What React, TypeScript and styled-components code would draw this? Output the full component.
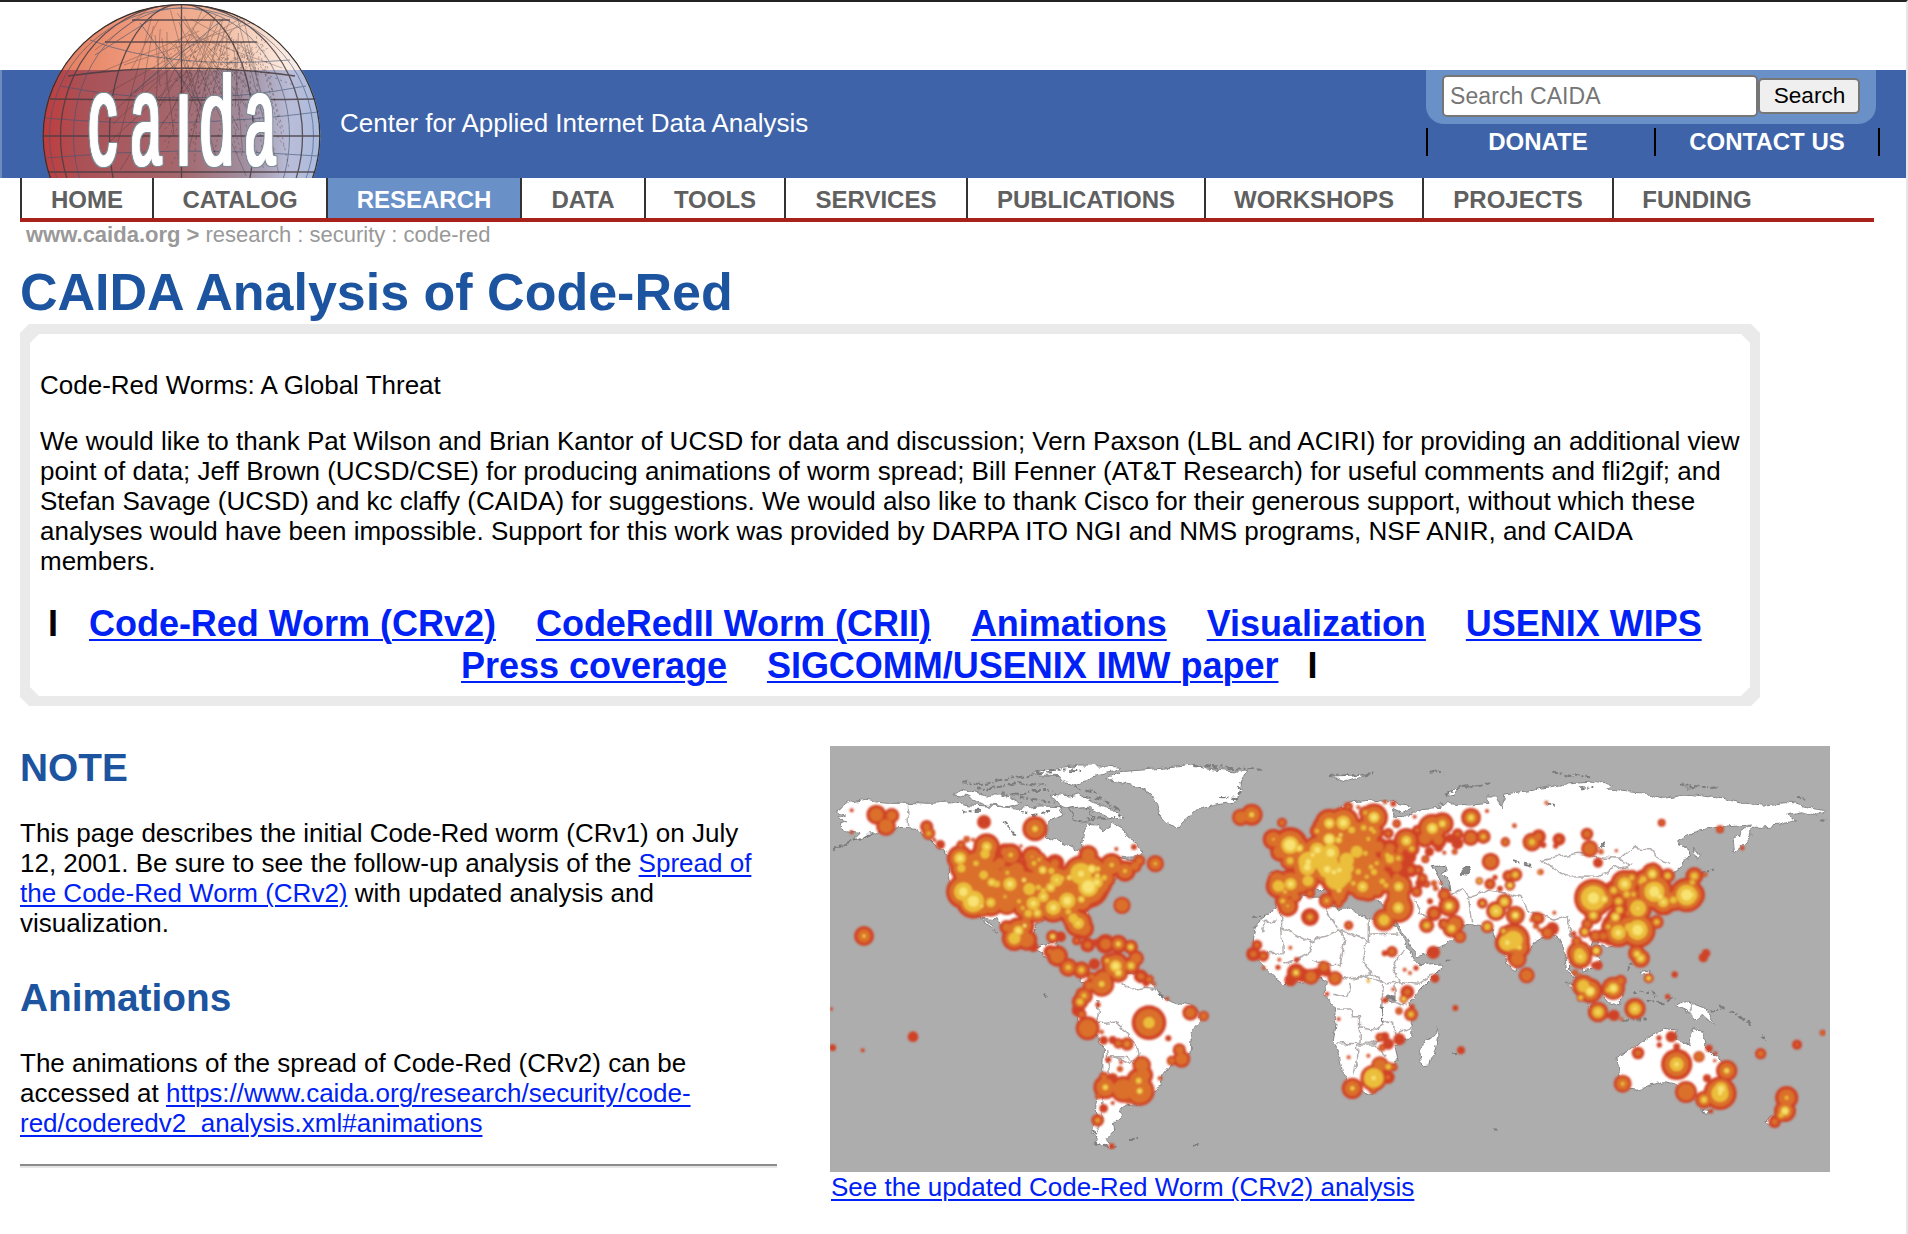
import React from 'react';
import styled, { createGlobalStyle } from 'styled-components';

const GlobalStyle = createGlobalStyle`
  * { box-sizing: border-box; }
  body { margin: 0; background: #fff; overflow: hidden; }
`;

const Page = styled.div`
  width: 1908px;
  height: 1234px;
  overflow: hidden;
  border-top: 2px solid #232323;
  border-right: 2px solid #e6e6e6;
  background: #fff;
  color: #000;
  font: 26px/30px "Liberation Sans", Arial, Helvetica, sans-serif;
`;

const Header = styled.header`
  display: flex;
  height: 176px;
  padding-left: 40px;
  background:
    linear-gradient(90deg, #6e8bc0 2px, transparent 2px) 0 68px no-repeat,
    linear-gradient(#fff 68px, #3e63a9 68px);
`;

const Globe = styled.svg`
  display: block;
  width: 284px;
  height: 176px;
  flex: none;
  overflow: visible;
`;

const Tagline = styled.div`
  margin: 106px 0 0 16px;
  color: #fff;
  white-space: nowrap;
`;

const Tools = styled.div`
  width: 480px;
  margin: 68px 0 0 auto;
`;

const SearchPanel = styled.form`
  display: flex;
  align-items: center;
  width: 450px;
  height: 54px;
  padding: 2px 0 4px 16px;
  border-radius: 0 0 18px 18px;
  background: #6a90c8;
`;

const SearchInput = styled.input`
  width: 316px;
  height: 42px;
  padding: 1px 6px 0;
  border: 2px solid #767676;
  border-radius: 5px;
  outline: none;
  background: #fff;
  font: 23px "Liberation Sans", Arial, sans-serif;
  letter-spacing: 0.1px;
  &::placeholder { color: #757575; opacity: 1; }
`;

const SearchButton = styled.button`
  width: 102px;
  height: 36px;
  padding: 0 0 0 1px;
  border: 2px solid #767676;
  border-radius: 5px;
  background: #efefef;
  color: #000;
  font: 22.6px "Liberation Sans", Arial, sans-serif;
`;

const QuickLinks = styled.div`
  display: grid;
  grid-template-columns: 228px 226px;
  height: 28px;
  margin-top: 4px;
  width: 454px;
  border-right: 2px solid #000;
`;

const QuickLink = styled.a<{ $inset: number }>`
  padding-right: ${(p) => p.$inset}px;
  border-left: 2px solid #000;
  color: #fff;
  text-align: center;
  font-size: 24px;
  font-weight: bold;
  line-height: 27px;
`;

const Nav = styled.nav`
  display: flex;
  width: 1854px;
  height: 44px;
  margin-left: 20px;
  border-bottom: 4px solid #a9211b;
`;

const NavItem = styled.a<{ $width: number; $active?: boolean }>`
  width: ${(p) => p.$width}px;
  border-left: 2px solid #333;
  background: ${(p) => (p.$active ? '#6a90c8' : '#fff')};
  color: ${(p) => (p.$active ? '#fff' : '#606060')};
  text-align: center;
  font-size: 24px;
  font-weight: bold;
  line-height: 43px;
`;

const Breadcrumb = styled.div`
  padding: 1px 26px 0;
  height: 28px;
  color: #999;
  font-size: 22px;
  line-height: 24px;
`;

const Title = styled.h1`
  margin: 12px 0 0 20px;
  height: 62px;
  color: #1c54a0;
  font-size: 52px;
  line-height: 60px;
`;

const BoxFrame = styled.section`
  width: 1740px;
  height: 382px;
  margin-left: 20px;
  padding: 10px;
  background: #eaeaea;
  clip-path: polygon(9px 0, calc(100% - 9px) 0, 100% 9px, 100% calc(100% - 9px), calc(100% - 9px) 100%, 9px 100%, 0 calc(100% - 9px), 0 9px);
`;

const BoxBody = styled.div`
  height: 100%;
  padding: 36px 0 0 10px;
  background: #fff;
  clip-path: polygon(9px 0, calc(100% - 9px) 0, 100% 9px, 100% calc(100% - 9px), calc(100% - 9px) 100%, 9px 100%, 0 calc(100% - 9px), 0 9px);
`;

const Paragraph = styled.p`
  margin: 0 0 26px;
`;

const Line = styled.span`
  display: block;
  white-space: nowrap;
`;

const Link = styled.a`
  color: #0021f5;
  text-decoration: underline;
  text-decoration-thickness: 2px;
  text-underline-offset: 3px;
`;

const JumpLinks = styled.div`
  padding-top: 1px;
  font-size: 36px;
  font-weight: bold;
  line-height: 42px;
  letter-spacing: -0.02px;
`;

const JumpRow = styled.div<{ $indent: number }>`
  display: flex;
  gap: 40px;
  padding-left: ${(p) => p.$indent}px;
  white-space: nowrap;
`;

const LeftBar = styled.span`
  margin-right: -9px;
`;

const RightBar = styled.span`
  margin-left: -11px;
`;

const Columns = styled.main`
  display: flex;
  gap: 53px;
  padding: 40px 0 0 20px;
`;

const Column = styled.div`
  width: 757px;
`;

const Section = styled.section`
  height: 230px;
`;

const Heading = styled.h2`
  margin: 0;
  height: 72px;
  color: #1c54a0;
  font-size: 38.8px;
  line-height: 44px;
`;

const Rule = styled.hr`
  margin: -42px 0 0;
  border: 0;
  height: 4px;
  border-top: 2px solid #8c8c8c;
  border-bottom: 2px solid #e6e6e6;
`;

const Figure = styled.figure`
  margin: 0;
  width: 1000px;
`;

const Caption = styled.figcaption`
  padding-left: 1px;
`;

const MapSvg = styled.svg`
  display: block;
  width: 1000px;
  height: 426px;
`;

const navItems = [
  { label: 'HOME', width: 132 },
  { label: 'CATALOG', width: 174 },
  { label: 'RESEARCH', width: 194, active: true },
  { label: 'DATA', width: 124 },
  { label: 'TOOLS', width: 140 },
  { label: 'SERVICES', width: 182 },
  { label: 'PUBLICATIONS', width: 238 },
  { label: 'WORKSHOPS', width: 218 },
  { label: 'PROJECTS', width: 190 },
  { label: 'FUNDING', width: 168 },
];

// Host clusters, grouped by region. Each entry is: x y red orange yellow pale (radii).
const regions: { dx: number; dy: number; data: string }[] = [
  {
    dx: 0, dy: 0,
    data: `169 224 30 20;215 227 23 14;198 258 30 21;320 260 20 10;326 280 20 14 5;361 314 14;343 300 6;492 246 21;645 266 38 28 9 3;
95 211 6;95 277 6;440 298 10 6;459 299 6 3;423 315 14 7;942 321 9;889 327 6;603 318 5;1006 371 26 18 5;906 496 26 19;132 588 30 20 6;
500 320 40 30 15 6;495 342 40 30 14;420 355 40 30 18 9;424 385 35 25 12;430 455 52 42 28 13;460 484 52 42 32 17;512 488 42 32 14 4;
485 498 34 26 6 4;440 405 42 32;468 370 42 32 8;491 405 60 50 13;515 427 50 40 12 5;530 432 40 30 10;570 432 60 50 20 9;562 398 30 20 6;
540 370 34 16;572 345 35 24 7;555 335 25 12;590 390 34 22;636 350 32 22 3;560 490 35 27;555 470 26 20 5;628 447 60 50 18;612 420 34 26 7 5;
642 370 30 22 7;657 359 24 17 5;705 370 28 12;668 390 40 30 12 6;694 393 30 22 9;710 420 45 35 19 5;725 415 24 18 8;692 442 40 30 14 6;
748 413 34 28 8 4;783 401 55 45 32 9;815 387 44 34 14 9;833 387 30 22 8 3;832 407 30 22 8 4;805 345 30 20;805 440 64 50 30 19;830 427 48 38 18 8;
853 413 34 26 8;875 375 36 26 7;915 393 32 22 6;945 378 20 12;958 362 18 10;742 482 50 42 24 12;700 503 45 35 22 9;640 490 55 45 20 8;
652 519 30 22 12 5;625 520 30 22 11;608 504 30 20 6;597 484 30 20 6;670 470 40 30 16 6;655 442 30 24 8;670 452 30 24 8;784 478 40 30 10 4;
595 572 40 30 15 8;583 595 38 28 18;614 557 30 20 6 5;620 600 32 22;640 620 16;560 562 22 12;745 515 34 24 8;760 535 34 26 14;775 550 42 32 17 5;
790 565 32 22;698 590 20 12 7 4;722 590 16;770 602 14 6;803 615 22 10;830 608 12;857 612 30 16;895 612 28 18 8 3;932 621 22 14 8 3;948 655 24 16;
690 635 20 8;712 648 32 22;745 682 28 19 8;784 690 26 17 8;823 672 17;862 662 20 12 6;887 678 42 32 18 10;933 677 26 18 10 3;895 698 30 22 11 6;
850 715 30 20;965 710 20 8`,
  },
  {
    dx: 0, dy: 660,
    data: `845 72 38 30 9 3;792 107 27 18 7;780 125 25 16 9;775 150 20;803 205 36 27;785 163 15 8;808 77 20 12;815 50 14 8;834 134 8;851 241 13;
845 216 7 4;878 240 12;895 250 16 9;921 252 20 12 3;865 299 9;903 307 6;900 327 9 5;987 188 52 41 17;1111 158 24 15;1151 168 16 10;1042 116 6;
1045 235 9;1078 270 20 12;1085 297 26 18;1055 302 15 9;965 315 28 20;970 345 30 20;956 362 38 28 9 3;959 393 45 36 9 5;910 388 40 31;856 382 36 27 9 4;
852 350 15 8;878 355 16;835 408 10 5;851 445 13;878 429 6;833 481 19 11 4;875 559 9;1020 355 7 3;279 230 16;128 271 6;38 263 10;34 147 5;
961 48 20 8;988 58 14 8;978 70 10;1003 72 6 3;925 425 8 4`,
  },
  {
    dx: 1080, dy: 0,
    data: `182 232 26 18;215 224 33 24 8 3;306 248 15 8;280 298 32 22 4;330 315 54 42 26 17;300 335 30 20;330 362 30 22 10;358 325 34 26 12 6;
448 250 44 34 16 8;490 248 48 38 21 10;505 200 14 6;411 273 22 13 6;430 262 34 24;515 270 40 30 10;470 285 44 34;448 298 50 40 18 12;476 300 40 30 10 4;
482 285 30 20 6 4;412 330 44 36 22 10;385 365 50 40 30 8;382 382 50 40 24 10;384 422 34 26 16;398 345 40 30 14 6;452 338 52 42 26 12;440 370 58 46 34;
442 388 50 40 26 10;462 397 46 36 24 7;478 390 46 36 22 7;470 415 50 40 34;500 360 50 40 22;495 410 40 30 20;530 335 50 40 18;505 385 40 30 16;
477 450 34 24 8 3;475 465 30 20;476 490 14 7;556 340 44 32 7;582 232 42 32 17 9;556 218 20 12 5;551 263 30 20 8;574 267 30 20 7;582 275 30 20 6;
565 297 36 26 6;595 320 30 16;535 202 6 3;615 186 7 3;640 191 9;650 251 13 6;625 280 16 7;530 300 36 24;535 395 44 32 8;520 430 36 26 7;
548 440 42 32 16 6;573 381 36 24 7;582 396 30 20 9;570 360 30 22;590 370 26 18 6;560 410 30 22 6;600 420 44 32;607 424 30 20 8;618 436 24 16 7;
565 455 30 20;590 450 26 16;622 346 30 20 7;630 357 34 24 12;655 355 26 16 7;650 380 36 16;605 380 26 10;630 325 28 14;660 330 30 10;
679 302 38 28 15 6;695 326 24 14 7;685 350 24;692 390 22 9;715 390 16 6;727 415 16 8;740 432 11 4;656 440 42 32 14 5;650 410 34 10;
655 503 46 36 16 6;612 540 34 26 16;655 470 36 28;292 420 30 22;295 438 38 28 17;300 440 34 26 14;332 432 44 34 18 8;315 455 30 20 6;
360 430 36 26;390 460 16 8;345 470 20 12;323 498 32 22 4;308 483 24 14 7;390 531 27 13 5;440 482 24 16 5;506 556 14 7;720 430 14;710 455 17 9;
757 265 44 34 17 9;787 251 34 24 11 4;735 295 28 18;775 300 26 14;776 322 14;712 270 16 6;704 230 6;748 335 14;736 358 12 6;793 338 6;833 282 17 7;
810 295 14;832 310 18;872 293 25 16;910 290 22 14 6;824 335 9 5;873 233 30 21 11 4;976 306 14 8;921 213 6;1003 257 7 3;1056 306 28 19 8;
1075 290 18 10;932 365 27 18;945 412 8;930 432 17 8;898 423 11 8 5;1006 404 21 14 8;985 408 18 8;990 436 16 10 8 4;960 446 9;1078 397 7 4 3;
762 430 9 5;767 445 8 4;782 429 5;750 484 9;793 464 20 11;807 498 32 22 12 7;762 520 23 12;740 556 23 16 8;792 552 18 9;825 552 28 20;
815 565 28 20 11 3;840 590 19 12;760 637 20;907 490 16 8 4;973 485 24 17 12 4;948 513 30 21 18 6;1006 526 29 21 11 7;922 560 19 13 9;
1000 600 50 40 28;982 608 38 28 24 7;1018 622 34 24 8 4;970 573 14 8 6;1012 657 28 20;990 655 10;1040 706 24 17;1070 533 18 9`,
  },
  {
    dx: 2040, dy: 0,
    data: `44 257 6 3;16 306 14 8;96 306 28 19 8;116 290 22 10;130 315 9;177 298 19 6;167 318 8;261 282 19 10;269 326 26 18;303 335 8 5;294 368 15;
139 188 6 3;349 332 5;485 248 12 5;660 268 12 5;727 324 7;122 396 9 5;280 474 58 48 37 17;312 478 36 26 12 7;374 432 43 33 20 9;
395 413 24 14 7;341 451 30 16 9;380 463 34 16 9;356 484 30 16 9;400 463 26 14 6;460 385 18 9;457 402 34 24 14 7;430 418 30 18 9;422 425 24 14 6;
503 407 22 14 8;463 455 56 46 30 16;490 486 40 30 16 6;480 470 40 30 10 7;520 480 34 24 10;560 465 52 42 31 17;575 465 40 30 18 6;
583 408 27 18 10;577 427 22 14 7;615 404 7 4;414 505 42 32 24 4;400 490 30 20;413 570 54 44 30 16;387 562 40 30 12;355 578 44 34 22 9;
346 531 26 16 12 6;358 510 24 14 9;340 555 34 20;325 560 22 12 6;385 520 30 8;280 526 27 18 11 4;262 552 18 10;254 575 18 12 8;286 588 19 11;
310 588 22 10;330 595 22;470 546 21 14 7;410 640 26 18 8;422 655 28 20 12 5;411 642 24 16 10 4;221 581 8;230 603 16 9;238 640 38 29 15;241 650 36 28 19 6;
289 632 18 11 10 4;294 676 14;283 676 10;618 640 13;610 653 14;524 704 9;157 566 20;142 578 20 12;116 535 18 9;95 540 7 4;108 558 9 5;
163 518 6 3;119 570 7 4`,
  },
  {
    dx: 1200, dy: 540,
    data: `111 75 16 7;100 102 22 9;130 108 17 8;211 83 6 3;178 119 6 3;230 119 8;174 142 8;131 144 6 3;228 158 28 15 8 4;212 180 19;248 165 22;
273 170 24 16;290 160 17;312 141 19 12;318 155 15;345 175 22 15;445 183 5 5 5 2;516 95 17 9;494 100 9;554 149 6 3;570 159 6 3;588 144 8;
645 175 13;321 222 7;495 241 9;520 208 6 3;562 216 21 9;551 237 13 9 7 3;537 273 11 6;573 283 21 14 7;576 260 8;356 297 6;480 352 14 6;
494 350 14;505 372 17;538 358 18;486 383 11 6;386 412 6 3;445 407 6 3;706 264 9;723 391 12;397 505 32 23 7 3;461 474 40 33 29 7;
480 435 26 19;505 440 15 10 8;520 441 13 6;504 472 20 6;459 508 14 7`,
  },
  {
    dx: 2160, dy: 540,
    data: `105 158 9 5;120 165 6 4;130 198 34 26 18;150 212 38 28 12;150 214 34 26 16 10;122 233 12 8 7;220 205 35 27 16 9;242 182 18 10;
205 210 20 14 7;174 276 31 23 16 5;285 266 32 24 17 5;222 286 17;203 287 8;244 297 6 4;326 175 15 10 7 3;404 163 9;383 230 8;394 350 17;
357 354 8;358 375 8;294 399 19 9;248 491 27 19 6;410 380 10;410 433 47 36 21 7;477 410 17 13;507 385 11;526 400 6;524 422 5;560 452 32 23 9 4;
438 516 33 25;501 475 12;540 520 50 40 26 6;543 507 38 30 20 10;492 539 27 19 10 3;513 574 7;662 401 17 9;771 374 15 4;848 338 9 5;
740 533 35 25 6;735 573 33 24 14 8;723 586 20 14 7;704 605 19 9`,
  },
];

const layers = [
  { column: 2, color: '#d04326' },
  { column: 3, color: '#da6f2c' },
  { column: 4, color: '#ebbe3a' },
  { column: 5, color: '#f8e272' },
];

const land = [
  // North and Central America
  '50,215 85,187 140,178 200,187 262,187 330,190 400,185 450,195 540,200 600,205 660,198 720,200 735,225 690,240 672,262 680,290 720,305 775,330 790,355 785,310 790,280 800,252 830,255 850,270 880,250 905,265 920,290 950,310 970,335 960,347 890,350 945,362 930,380 900,400 860,450 800,510 812,560 800,590 780,580 750,540 700,535 650,550 640,590 650,625 690,606 712,600 715,625 700,635 760,680 830,720 810,735 760,700 700,660 650,635 600,620 560,580 530,540 490,535 430,520 390,470 385,400 390,350 350,320 320,290 290,268 250,265 200,270 140,290 40,325 100,300 120,280 80,275 60,255 80,245 50,235 80,222',
  // Greenland
  '855,118 900,95 990,88 1080,80 1125,74 1160,84 1210,90 1280,95 1266,120 1262,150 1250,185 1180,197 1130,210 1090,245 1075,264 1045,252 1020,225 1010,190 992,160 960,140 900,130',
  // Canadian Arctic
  '395,165 420,148 462,156 500,165 560,165 605,190 560,200 500,195 470,185 440,170',
  '640,100 700,88 780,78 860,78 905,82 880,95 825,105 800,125 760,135 735,125 720,110 660,108',
  '690,165 740,170 775,162 820,190 880,205 910,235 885,240 850,225 805,205 740,205 715,195',
  // South America
  '860,700 960,700 1000,735 1020,765 1060,785 1112,795 1142,842 1115,870 1110,940 1085,970 1050,975 1030,1000 1020,1030 1000,1060 980,1085 920,1095 895,1110 902,1130 880,1150 885,1170 858,1195 880,1222 840,1215 815,1180 825,1150 828,1090 848,1000 850,930 835,890 780,850 765,800 800,760 815,720',
  // Eurasia with Arabia and India
  '1350,450 1350,400 1400,395 1440,370 1500,330 1500,300 1490,270 1500,240 1560,200 1600,185 1660,180 1700,185 1760,195 1778,208 1745,216 1720,205 1725,228 1765,232 1790,210 1860,205 1860,190 1950,195 2010,190 2000,168 2030,168 2045,200 2055,165 2130,155 2160,145 2240,132 2330,125 2375,135 2360,150 2480,160 2530,175 2610,163 2700,175 2760,188 2830,195 2900,188 2960,200 3015,213 2990,228 2950,215 2900,225 2930,240 2880,255 2820,262 2796,262 2795,285 2770,315 2745,335 2738,295 2760,278 2795,255 2730,260 2640,272 2600,285 2570,308 2600,320 2612,345 2590,375 2560,402 2530,400 2480,440 2500,500 2460,520 2440,600 2360,620 2320,600 2312,620 2340,660 2330,682 2290,690 2270,660 2250,640 2252,690 2272,720 2240,690 2232,630 2215,590 2190,580 2130,615 2100,650 2088,692 2072,686 2040,620 2020,570 1950,558 1910,550 1860,540 1870,570 1900,590 1880,610 1820,635 1792,652 1770,610 1735,560 1700,500 1650,470 1600,470 1560,430 1500,450 1440,430 1400,460',
  // Africa
  '1375,480 1350,520 1312,550 1300,600 1305,640 1320,670 1360,710 1390,728 1440,725 1500,715 1522,725 1515,765 1542,800 1548,850 1540,905 1562,950 1570,1000 1600,1045 1660,1060 1710,1000 1735,960 1725,915 1775,890 1777,840 1770,790 1800,750 1860,690 1863,672 1800,677 1782,662 1765,630 1732,565 1718,545 1640,535 1585,503 1555,512 1522,492 1500,468 1450,470 1400,490',
  // Madagascar, Australia, Tasmania, New Guinea
  '1853,862 1857,885 1840,940 1825,975 1805,977 1800,940 1812,910 1838,893',
  '2388,950 2430,933 2460,910 2490,885 2530,865 2572,870 2565,890 2608,917 2625,858 2650,890 2655,915 2690,950 2722,1000 2722,1060 2660,1095 2610,1070 2560,1030 2530,1025 2490,1035 2460,1048 2408,1042 2395,1000',
  '2645,1108 2672,1112 2662,1128',
  '2563,796 2590,780 2650,803 2688,852 2665,840 2650,826 2620,840 2600,810',
  // Sumatra, Java, Borneo, Philippines, New Zealand
  '2235,720 2262,738 2300,790 2338,824 2318,818 2280,770',
  '2350,765 2415,762 2400,795 2368,786',
  '2460,695 2490,690 2492,706 2468,704',
  '2832,1145 2848,1133 2866,1140 2845,1154',
  // Arctic islands, Sakhalin
  '1535,108 1590,106 1640,101 1622,112 1580,125',
  '1875,165 1905,143 1965,134 1910,150 1900,170',
  '2235,103 2270,106 2262,110',
  '2585,137 2630,139 2600,142',
  '2620,318 2638,350 2630,356 2622,340',
  '480,533 510,550 528,574 505,558',
];

const borders = [
  // Americas
  '262,187 266,265', '830,780 835,820 830,850 860,850 890,846 925,880 940,900 955,925 960,945 930,970 885,950', '905,730 930,750 980,742 1015,748', '860,930 868,1000 850,1060 845,1140 830,1180', '870,950 920,950 945,975',
  // North and West Africa
  '1325,580 1330,545 1370,540', '1385,480 1385,560 1390,635 1320,640', '1385,562 1470,605 1560,570 1525,520 1520,470', '1470,605 1472,635 1430,660 1390,672', '1560,570 1575,590 1560,680 1500,665 1472,660', '1560,570 1645,600 1645,510', '1645,600 1650,585 1735,582', '1640,600 1630,660 1655,700 1600,720', '1655,700 1700,735 1740,725 1720,690 1750,630', '1740,725 1800,730 1840,700',
  // Central and Southern Africa
  '1550,700 1580,720 1640,705 1665,725 1690,730', '1540,760 1580,770 1590,735', '1690,735 1685,800 1690,830', '1550,810 1590,810 1595,830 1622,830 1620,910 1540,912', '1620,860 1665,868 1700,845 1720,850 1725,880 1775,862', '1610,915 1610,955 1600,1000', '1610,915 1665,915 1700,950', '1620,910 1665,910 1695,880', '1700,780 1760,800', '1725,730 1725,780',
  // Asia
  '2160,360 2240,345 2280,340 2330,350 2400,355 2440,320 2490,330 2510,355 2550,370', '2160,360 2200,385 2240,410 2330,412 2380,385 2430,375 2400,355', '1880,470 1920,450 1950,470 2010,450 2060,460 2100,470 2120,510 2200,540 2240,530 2260,590', '1945,470 1955,550', '1785,480 1800,520 1840,530', '2612,790 2616,835',
];

const speckles = [
  '430,130 480,135 540,120 620,108 690,100', '470,150 540,140 600,130 680,135', '540,160 600,165 650,150 700,150', '600,170 640,180 700,185', '650,95 720,92 780,90', '430,215 480,212', '550,245 590,290', '600,215 640,222 690,215', '790,170 850,180 900,210', '800,235 860,240 900,225', '760,140 840,160',
  '1200,170 1250,178 1260,130', '1120,75 1200,82 1330,90', '1530,105 1580,103 1660,100', '1835,98 1870,95', '1875,165 1920,143 2010,130', '2200,98 2310,112', '2580,136 2690,143', '2928,175 2960,172', '3000,238 3020,240',
  '2280,145 2320,142', '2180,190 2210,196', '2080,360 2140,380', '2350,305 2340,330', '2640,400 2680,388', '2420,690 2440,670', '2440,760 2485,755', '2480,785 2530,790 2560,775', '2500,750 2510,775', '2410,836 2490,835', '2670,815 2710,805 2700,795', '2728,812 2760,830 2790,856', '2825,888 2838,904',
  '820,1170 830,1210 890,1222', '930,1197 958,1196', '1122,1217 1138,1219', '674,768 682,772', '1900,942 1908,943', '1298,530 1335,530', '1880,662 1895,662', '2020,1168 2034,1169', '1685,800 1690,850', '1708,770 1725,780', '1015,765 1030,775 1020,760', '40,325 90,305 150,285',
];

const bubbles = regions.flatMap(({ dx, dy, data }) =>
  data.split(';').map((entry) => {
    const v = entry.trim().split(/\s+/).map(Number);
    return [v[0] + dx, v[1] + dy, ...v.slice(2)];
  }),
);

function WorldMap() {
  return (
    <MapSvg viewBox="30 18 3000 1278" aria-label="Map of infected hosts">
      <defs>
        <filter id="coast" x="0" y="0" width="100%" height="100%">
          <feTurbulence type="fractalNoise" baseFrequency="0.035" numOctaves="3" seed="4" />
          <feDisplacementMap in="SourceGraphic" scale="22" xChannelSelector="R" yChannelSelector="G" result="rough" />
          <feGaussianBlur in="rough" stdDeviation="1.6" />
        </filter>
        <filter id="glow" x="0" y="0" width="100%" height="100%">
          <feGaussianBlur stdDeviation="2.4" />
        </filter>
      </defs>
      <rect x="30" y="18" width="3000" height="1278" fill="#adadad" />
      <g filter="url(#coast)">
        <g fill="#fff" stroke="#858585" strokeWidth="3" strokeLinejoin="round">
          {land.map((points) => <polygon key={points} points={points} />)}
        </g>
        <g fill="#adadad" stroke="#777" strokeWidth="3">
          <polygon points="1840,380 1875,376 1882,388 1868,398 1888,425 1893,452 1870,445 1858,412" />
          <ellipse cx="1937" cy="392" rx="14" ry="10" fill="#888" />
          <ellipse cx="1714" cy="776" rx="11" ry="12" fill="#888" />
          <polygon points="745,205 790,200 830,235 800,250 760,240" />
        </g>
        <g fill="none" stroke="#b3adad" strokeWidth="4.5">
          {borders.map((points) => <polyline key={points} points={points} />)}
        </g>
        <g fill="none" stroke="#7b7b7b" strokeWidth="6" strokeDasharray="14 5 6 9 22 7">
          {speckles.map((points) => <polyline key={points} points={points} />)}
        </g>
      </g>
      <g filter="url(#glow)">
        {layers.map(({ column, color }) => (
          <g key={color} fill={color}>
            {bubbles.filter((b) => b[column]).map((b, i) => (
              <circle key={i} cx={b[0]} cy={b[1]} r={b[column]} />
            ))}
          </g>
        ))}
      </g>
    </MapSvg>
  );
}

const logoLetters = [
  { char: 'c', x: 88.5, w: 0.43, h: 1 },
  { char: 'a', x: 131, w: 0.41, h: 1 },
  { char: 'ı', x: 175.5, w: 0.44, h: 1 },
  { char: 'd', x: 200, w: 0.46, h: 0.96 },
  { char: 'a', x: 245, w: 0.41, h: 1 },
];

// Backbone links drawn across the globe.
const links = Array.from({ length: 46 }, (_, i) => {
  const a = (i * 47) % 61;
  const b = (i * 29) % 53;
  return `M${150 + a * 1.7} ${8 + ((i * 13) % 40)}L${95 + b * 3.6} ${50 + ((i * 37) % 128)}`;
}).join('');

function GlobeLogo() {
  return (
    <Globe viewBox="40 2 284 176" aria-label="CAIDA">
      <defs>
        <linearGradient id="warm">
          <stop offset="0" stopColor="#e0785a" />
          <stop offset="0.3" stopColor="#ee9678" />
          <stop offset="0.6" stopColor="#f0b396" />
          <stop offset="0.85" stopColor="#fbe8dc" />
          <stop offset="1" stopColor="#f4f2f5" />
        </linearGradient>
        <linearGradient id="cool">
          <stop offset="0" stopColor="#c23b3c" />
          <stop offset="0.15" stopColor="#aa5156" />
          <stop offset="0.5" stopColor="#a4686e" />
          <stop offset="0.72" stopColor="#a18e9f" />
          <stop offset="0.88" stopColor="#b9bdd8" />
          <stop offset="1" stopColor="#a9bbdf" />
        </linearGradient>
        <clipPath id="ball"><ellipse cx="181.5" cy="136" rx="139" ry="132" /></clipPath>
        <clipPath id="horizon"><rect x="40" y="2" width="284" height="176" /></clipPath>
        <filter id="rim" x="-10%" y="-20%" width="120%" height="140%">
          <feOffset in="SourceGraphic" dx="-1.1" result="west" />
          <feOffset in="SourceGraphic" dx="1.1" result="east" />
          <feMerge result="bold">
            <feMergeNode in="west" />
            <feMergeNode in="SourceGraphic" />
            <feMergeNode in="east" />
          </feMerge>
          <feColorMatrix in="bold" type="matrix" values="0 0 0 0 0.2  0 0 0 0 0.26  0 0 0 0 0.3  0 0 0 1 0" result="dark" />
          <feMorphology in="dark" operator="dilate" radius="1.1" result="fat" />
          <feGaussianBlur in="fat" stdDeviation="0.6" result="soft" />
          <feMerge><feMergeNode in="soft" /><feMergeNode in="bold" /></feMerge>
        </filter>
      </defs>
      <g clipPath="url(#horizon)">
        <g clipPath="url(#ball)">
          <rect x="40" y="2" width="284" height="68" fill="url(#warm)" />
          <rect x="40" y="70" width="284" height="110" fill="url(#cool)" />
          <g fill="none" stroke="#4a3d42" strokeWidth="1.3" opacity="0.85">
            <path d="M181.5 4V180M50 99Q181 101 315 99M42 136H322M46 172H318M105 42H257M132 20H230M68 76Q181 60 295 76" />
            <ellipse cx="181.5" cy="136" rx="121" ry="132" />
            <ellipse cx="181.5" cy="136" rx="72" ry="132" />
          </g>
          <g fill="none" stroke="#3f5573" strokeWidth="1" opacity="0.6">
            <ellipse cx="181.5" cy="136" rx="132" ry="128" />
            <ellipse cx="181.5" cy="136" rx="108" ry="128" />
            <path d="M90 40Q170 70 290 60M60 86Q180 110 306 86M45 118Q180 130 318 112M46 158Q180 145 318 156M95 55L150 20M140 23L205 110M222 20L130 95" />
          </g>
          <path d={links} stroke="#3c3236" strokeWidth="0.8" opacity="0.4" />
          <path d={links} transform="translate(80 30) scale(.75 .8)" stroke="#3c3236" strokeWidth="0.9" strokeDasharray="3 4" opacity="0.5" />
          <ellipse cx="181.5" cy="136" rx="138.5" ry="131.5" fill="none" stroke="#333" strokeWidth="1.6" />
        </g>
      </g>
      <g filter="url(#rim)" fill="#fff" fontFamily='"Liberation Sans", Arial, sans-serif' fontSize="132">
        {logoLetters.map(({ char, x, w, h }) => (
          <text key={x} transform={`translate(${x} 165) scale(${w} ${h})`} stroke="#fff" strokeWidth="1.5">{char}</text>
        ))}
      </g>
    </Globe>
  );
}

export default function App() {
  return (
    <Page>
      <GlobalStyle />
      <Header>
        <GlobeLogo />
        <Tagline>Center for Applied Internet Data Analysis</Tagline>
        <Tools>
          <SearchPanel>
            <SearchInput placeholder="Search CAIDA" />
            <SearchButton type="button">Search</SearchButton>
          </SearchPanel>
          <QuickLinks>
            <QuickLink $inset={6}>DONATE</QuickLink>
            <QuickLink $inset={2}>CONTACT US</QuickLink>
          </QuickLinks>
        </Tools>
      </Header>
      <Nav>
        {navItems.map((item) => (
          <NavItem key={item.label} $width={item.width} $active={item.active}>{item.label}</NavItem>
        ))}
      </Nav>
      <Breadcrumb><b>www.caida.org &gt;</b> research : security : code-red</Breadcrumb>
      <Title>CAIDA Analysis of Code-Red</Title>
      <BoxFrame>
        <BoxBody>
          <Paragraph>Code-Red Worms: A Global Threat</Paragraph>
          <Paragraph>
            <Line>We would like to thank Pat Wilson and Brian Kantor of UCSD for data and discussion; Vern Paxson (LBL and ACIRI) for providing an additional view</Line>
            <Line>point of data; Jeff Brown (UCSD/CSE) for producing animations of worm spread; Bill Fenner (AT&amp;T Research) for useful comments and fli2gif; and</Line>
            <Line>Stefan Savage (UCSD) and kc claffy (CAIDA) for suggestions. We would also like to thank Cisco for their generous support, without which these</Line>
            <Line>analyses would have been impossible. Support for this work was provided by DARPA ITO NGI and NMS programs, NSF ANIR, and CAIDA</Line>
            <Line>members.</Line>
          </Paragraph>
          <JumpLinks>
            <JumpRow $indent={8}>
              <LeftBar>I</LeftBar>
              <Link>Code-Red Worm (CRv2)</Link>
              <Link>CodeRedII Worm (CRII)</Link>
              <Link>Animations</Link>
              <Link>Visualization</Link>
              <Link>USENIX WIPS</Link>
            </JumpRow>
            <JumpRow $indent={421}>
              <Link>Press coverage</Link>
              <Link>SIGCOMM/USENIX IMW paper</Link>
              <RightBar>I</RightBar>
            </JumpRow>
          </JumpLinks>
        </BoxBody>
      </BoxFrame>
      <Columns>
        <Column>
          <Section>
            <Heading>NOTE</Heading>
            <Paragraph>
              <Line>This page describes the initial Code-Red worm (CRv1) on July</Line>
              <Line>12, 2001. Be sure to see the follow-up analysis of the <Link>Spread of</Link></Line>
              <Line><Link>the Code-Red Worm (CRv2)</Link> with updated analysis and</Line>
              <Line>visualization.</Line>
            </Paragraph>
          </Section>
          <Section>
            <Heading>Animations</Heading>
            <Paragraph>
              <Line>The animations of the spread of Code-Red (CRv2) can be</Line>
              <Line>accessed at <Link>https://www.caida.org/research/security/code-</Link></Line>
              <Line><Link>red/coderedv2_analysis.xml#animations</Link></Line>
            </Paragraph>
          </Section>
          <Rule />
        </Column>
        <Figure>
          <WorldMap />
          <Caption><Link>See the updated Code-Red Worm (CRv2) analysis</Link></Caption>
        </Figure>
      </Columns>
    </Page>
  );
}
